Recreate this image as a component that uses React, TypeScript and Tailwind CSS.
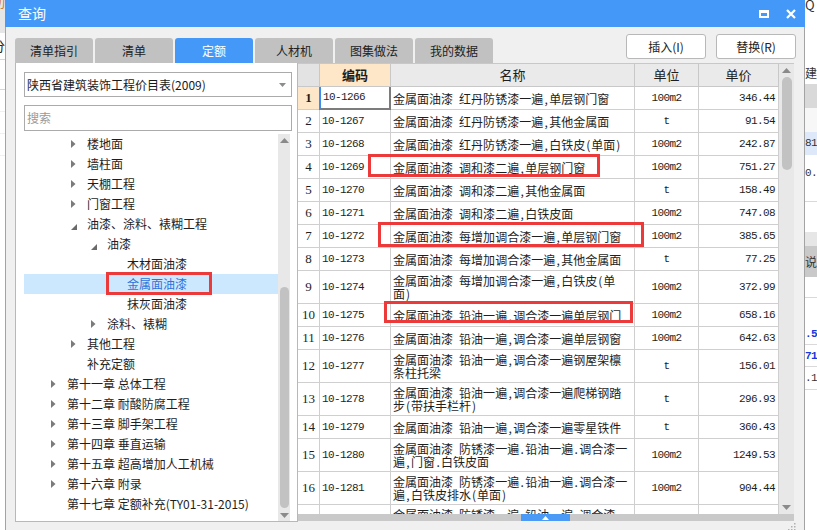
import React from "react";

type Row = { n: number; code: string; lines: string[]; unit: string; price: string; tall?: boolean };

const rows: Row[] = [
  { n: 1, code: "10-1266", lines: ["金属面油漆 红丹防锈漆一遍,单层钢门窗"], unit: "100m2", price: "346.44" },
  { n: 2, code: "10-1267", lines: ["金属面油漆 红丹防锈漆一遍,其他金属面"], unit: "t", price: "91.54" },
  { n: 3, code: "10-1268", lines: ["金属面油漆 红丹防锈漆一遍,白铁皮(单面)"], unit: "100m2", price: "242.87" },
  { n: 4, code: "10-1269", lines: ["金属面油漆 调和漆二遍,单层钢门窗"], unit: "100m2", price: "751.27" },
  { n: 5, code: "10-1270", lines: ["金属面油漆 调和漆二遍,其他金属面"], unit: "t", price: "158.49" },
  { n: 6, code: "10-1271", lines: ["金属面油漆 调和漆二遍,白铁皮面"], unit: "100m2", price: "747.08" },
  { n: 7, code: "10-1272", lines: ["金属面油漆 每增加调合漆一遍,单层钢门窗"], unit: "100m2", price: "385.65" },
  { n: 8, code: "10-1273", lines: ["金属面油漆 每增加调合漆一遍,其他金属面"], unit: "t", price: "77.25" },
  { n: 9, code: "10-1274", lines: ["金属面油漆 每增加调合漆一遍,白铁皮(单", "面)"], unit: "100m2", price: "372.99", tall: true },
  { n: 10, code: "10-1275", lines: ["金属面油漆 铅油一遍,调合漆一遍单层钢门"], unit: "100m2", price: "658.16" },
  { n: 11, code: "10-1276", lines: ["金属面油漆 铅油一遍,调合漆一遍单层钢窗"], unit: "100m2", price: "642.63" },
  { n: 12, code: "10-1277", lines: ["金属面油漆 铅油一遍,调合漆一遍钢屋架檩", "条柱托梁"], unit: "t", price: "156.01", tall: true },
  { n: 13, code: "10-1278", lines: ["金属面油漆 铅油一遍,调合漆一遍爬梯钢踏", "步(带扶手栏杆)"], unit: "t", price: "296.93", tall: true },
  { n: 14, code: "10-1279", lines: ["金属面油漆 铅油一遍,调合漆一遍零星铁件"], unit: "t", price: "360.43" },
  { n: 15, code: "10-1280", lines: ["金属面油漆 防锈漆一遍.铅油一遍.调合漆一", "遍,门窗.白铁皮面"], unit: "100m2", price: "1249.53", tall: true },
  { n: 16, code: "10-1281", lines: ["金属面油漆 防锈漆一遍.铅油一遍.调合漆一", "遍,白铁皮排水(单面)"], unit: "100m2", price: "904.44", tall: true },
  { n: 17, code: "10-1282", lines: ["金属面油漆 防锈漆一遍.铅油一遍.调合漆一", "遍,其他金属面"], unit: "t", price: "214.36", tall: true },
];

type TreeItem = { t: string; l: 0 | 1 | 2 | 3; a: "c" | "e" | "n"; sel?: boolean };

const tree: TreeItem[] = [
  { t: "楼地面", l: 1, a: "c" },
  { t: "墙柱面", l: 1, a: "c" },
  { t: "天棚工程", l: 1, a: "c" },
  { t: "门窗工程", l: 1, a: "c" },
  { t: "油漆、涂料、裱糊工程", l: 1, a: "e" },
  { t: "油漆", l: 2, a: "e" },
  { t: "木材面油漆", l: 3, a: "n" },
  { t: "金属面油漆", l: 3, a: "n", sel: true },
  { t: "抹灰面油漆", l: 3, a: "n" },
  { t: "涂料、裱糊", l: 2, a: "c" },
  { t: "其他工程", l: 1, a: "c" },
  { t: "补充定额", l: 1, a: "n" },
  { t: "第十一章 总体工程", l: 0, a: "c" },
  { t: "第十二章 耐酸防腐工程", l: 0, a: "c" },
  { t: "第十三章 脚手架工程", l: 0, a: "c" },
  { t: "第十四章 垂直运输", l: 0, a: "c" },
  { t: "第十五章 超高增加人工机械", l: 0, a: "c" },
  { t: "第十六章 附录", l: 0, a: "c" },
  { t: "第十七章 定额补充(TY01-31-2015)", l: 0, a: "n" },
];

const plMap: Record<number, string> = { 0: "pl-[27px]", 1: "pl-[47px]", 2: "pl-[67px]", 3: "pl-[87px]" };

const tabs = ["清单指引", "清单", "定额", "人材机", "图集做法", "我的数据"];

function Name({ text }: { text: string }) {
  return (
    <span className="whitespace-nowrap">
      {Array.from(text).map((ch, i) =>
        ch.charCodeAt(0) < 128 ? (
          <span key={i} className="inline-block w-[6px] text-center">
            {ch === " " ? "\u00a0" : ch}
          </span>
        ) : (
          <React.Fragment key={i}>{ch}</React.Fragment>
        )
      )}
    </span>
  );
}

function Arrow({ a }: { a: "c" | "e" | "n" }) {
  return (
    <div className="w-[16px] h-[20px] flex items-center shrink-0">
      {a === "c" && (
        <svg width="5" height="8" viewBox="0 0 5 8">
          <polygon points="0,0 4.5,4 0,8" fill="#7b7b7b" />
        </svg>
      )}
      {a === "e" && (
        <svg width="6" height="6" viewBox="0 0 6 6" className="mt-[5px]">
          <polygon points="6,0 6,6 0,6" fill="#6a6a6a" />
        </svg>
      )}
    </div>
  );
}

function UpTri() {
  return (
    <svg width="9" height="5" viewBox="0 0 9 5">
      <polygon points="0,5 4.5,0 9,5" fill="#8a8a8a" />
    </svg>
  );
}
function DownTri() {
  return (
    <svg width="9" height="5" viewBox="0 0 9 5">
      <polygon points="0,0 9,0 4.5,5" fill="#8a8a8a" />
    </svg>
  );
}

const mono = "font-['Liberation_Mono',monospace] text-[11px] tracking-[-0.6px]";

export default function App() {
  return (
    <div className="w-[817px] h-[530px] overflow-hidden flex bg-white font-['Noto_Sans_CJK_SC',sans-serif] text-[#1e1e1e]">
      {/* left background app strip */}
      <div className="w-[5px] h-[530px] flex flex-col shrink-0 overflow-hidden">
        <div className="h-[33px] bg-[#e6e6e6] flex justify-end items-start overflow-hidden">
          <span className="whitespace-nowrap text-[12px] leading-[10px] text-[#d0781e] -mt-[2px]">项切</span>
        </div>
        <div className="h-[27px] border-b border-[#d6d6d6] flex justify-end items-center overflow-hidden">
          <span className="whitespace-nowrap text-[13px] text-[#222]">部分</span>
        </div>
        <div className="h-[30px] border-b border-[#d6d6d6]" />
        <div className="h-[22px] border-b border-[#f0f0f0]" />
        <div className="h-[22px] border-b border-[#f0f0f0]" />
        <div className="h-[22px] border-b border-[#f0f0f0]" />
        <div className="flex-1 bg-white" />
      </div>

      {/* dialog */}
      <div className="w-[800px] h-[530px] flex flex-col shrink-0">
        <div className="h-[27px] bg-[#4499f8] flex items-center justify-between pl-[13px] pr-[9px] shrink-0">
          <span className="text-white text-[14px]">查询</span>
          <div className="flex items-center gap-[17px]">
            <svg width="10" height="8" viewBox="0 0 10 8">
              <rect x="1" y="1" width="8" height="6" fill="none" stroke="white" strokeWidth="2" />
              <rect x="0" y="0" width="10" height="3" fill="white" />
            </svg>
            <svg width="10" height="10" viewBox="0 0 10 10">
              <path d="M1 1 L9 9 M9 1 L1 9" stroke="white" strokeWidth="2.2" />
            </svg>
          </div>
        </div>

        <div className="flex-1 flex flex-col bg-[#f0f0f0] border-l border-r border-[#a3a3a3] pl-[9px] pr-[8px]">
          {/* tabs + buttons */}
          <div className="h-[36px] flex justify-between items-start shrink-0">
            <div className="mt-[11px] flex gap-[2px]">
              {tabs.map((t) => (
                <div
                  key={t}
                  className={
                    t === "定额"
                      ? "w-[78px] h-[25px] rounded-t-[3px] bg-[#4499f8] text-white text-[12px] flex items-center justify-center"
                      : "w-[78px] h-[25px] rounded-t-[3px] bg-[#c1c1c1] text-[#222] text-[12px] flex items-center justify-center"
                  }
                >
                  {t}
                </div>
              ))}
            </div>
            <div className="mt-[7px] flex gap-[10px]">
              <div className="w-[80px] h-[25px] bg-white border border-[#b8b8b8] rounded-[3px] text-[12px] text-[#222] flex items-center justify-center">
                插入(I)
              </div>
              <div className="w-[80px] h-[25px] bg-white border border-[#b8b8b8] rounded-[3px] text-[12px] text-[#222] flex items-center justify-center">
                替换(R)
              </div>
            </div>
          </div>

          {/* content */}
          <div className="flex h-[459px] shrink-0">
            {/* left panel */}
            <div className="w-[283px] h-[459px] bg-white border-l border-r border-b border-[#b8b8b8] flex flex-col pt-[9px] shrink-0">
              <div className="ml-[8px] mr-[5px] h-[25px] border border-[#ababab] flex items-center justify-between pl-[2px] pr-[5px] text-[12px] text-[#1a1a1a]">
                <span>陕西省建筑装饰工程价目表(2009)</span>
                <svg width="7" height="4" viewBox="0 0 7 4">
                  <polygon points="0,0 7,0 3.5,4" fill="#8c8c8c" />
                </svg>
              </div>
              <div className="ml-[8px] mr-[5px] mt-[8px] h-[26px] border border-[#ababab] flex items-center pl-[2px] text-[12px] text-[#9a9a9a]">
                搜索
              </div>
              <div className="mt-[3px] ml-[8px] mr-[5px] flex flex-1 min-h-0">
                <div className="w-[254px] flex flex-col">
                  {tree.map((it) => (
                    <div
                      key={it.t}
                      className={
                        (it.sel ? "bg-[#cce8ff] text-[#2f73d9] " : "text-[#1e1e1e] ") +
                        "relative h-[20px] flex items-center text-[12px] whitespace-nowrap " +
                        plMap[it.l]
                      }
                    >
                      <Arrow a={it.a} />
                      <span>{it.t}</span>
                      {it.sel && (
                        <div className="absolute left-[82px] top-[-2px] w-[106px] h-[23px] border-[3px] border-[#ec3a3a]" />
                      )}
                    </div>
                  ))}
                </div>
                <div className="w-[12px] bg-[#e8e8e8] flex flex-col items-center">
                  <div className="h-[12px] flex items-center justify-center">
                    <UpTri />
                  </div>
                  <div className="h-[141px]" />
                  <div className="w-[9px] h-[221px] rounded-[5px] bg-[#c2c2c2]" />
                  <div className="flex-1" />
                  <div className="h-[12px] flex items-center justify-center">
                    <DownTri />
                  </div>
                </div>
              </div>
            </div>

            {/* table panel */}
            <div className="w-[496px] h-[458px] flex flex-col shrink-0">
              <div className="flex h-[451px] border-t border-[#c8c8c8]">
                <div className="w-[481px] flex flex-col">
                  <div className="grid grid-cols-[22px_71px_244px_64px_80px] h-[23px] text-[13px] shrink-0">
                    <div className="bg-[#e3e3e3] border-r border-b border-[#c8c8c8]" />
                    <div className="bg-[#fde7c8] border-r border-b border-[#c8c8c8] flex items-center justify-center font-bold">
                      编码
                    </div>
                    <div className="bg-[#eaeaea] border-r border-b border-[#c8c8c8] flex items-center justify-center">名称</div>
                    <div className="bg-[#eaeaea] border-r border-b border-[#c8c8c8] flex items-center justify-center">单位</div>
                    <div className="bg-[#eaeaea] border-r border-b border-[#c8c8c8] flex items-center justify-center">单价</div>
                  </div>
                  <div className="relative flex-1 overflow-hidden bg-white">
                    {rows.map((r) => (
                      <div
                        key={r.n}
                        className={
                          (r.tall ? "h-[33px] " : "h-[23px] ") +
                          "grid grid-cols-[22px_71px_244px_64px_80px] text-[12px]"
                        }
                      >
                        <div
                          className={
                            (r.n === 1 ? "bg-[#fde7c8] font-bold " : "") +
                            "border-r border-b border-[#cfcfcf] flex items-center justify-center font-['Liberation_Serif',serif] text-[13px]"
                          }
                        >
                          {r.n}
                        </div>
                        <div
                          className={
                            (r.n === 1
                              ? "border-l-2 border-l-[#3b8cf5] border-r-2 border-r-[#7c7c7c] border-b-2 border-b-[#7c7c7c] -ml-[1px] "
                              : "border-r border-b border-[#cfcfcf] ") +
                            "flex items-center pl-[2px] " +
                            mono
                          }
                        >
                          {r.code}
                        </div>
                        <div className="border-r border-b border-[#cfcfcf] flex flex-col justify-center pl-[2px] leading-[13px] overflow-hidden">
                          {r.lines.map((l, i) => (
                            <div key={i}>
                              <Name text={l} />
                            </div>
                          ))}
                        </div>
                        <div className={"border-r border-b border-[#cfcfcf] flex items-center justify-center " + mono}>
                          {r.unit}
                        </div>
                        <div className={"border-r border-b border-[#cfcfcf] flex items-center justify-end pr-[3px] " + mono}>
                          {r.price}
                        </div>
                      </div>
                    ))}
                    <div className="absolute left-[70px] top-[67px] w-[232px] h-[23px] border-[3px] border-[#ec3a3a]" />
                    <div className="absolute left-[80px] top-[135px] w-[266px] h-[25px] border-[3px] border-[#ec3a3a]" />
                    <div className="absolute left-[86px] top-[214px] w-[249px] h-[22px] border-[3px] border-[#ec3a3a]" />
                  </div>
                </div>
                <div className="w-[15px] bg-[#e8e8e8] flex flex-col items-center">
                  <div className="h-[13px] flex items-center justify-center">
                    <UpTri />
                  </div>
                  <div className="w-[10px] h-[93px] rounded-[5px] bg-[#c2c2c2]" />
                  <div className="flex-1" />
                  <div className="h-[13px] flex items-center justify-center">
                    <DownTri />
                  </div>
                </div>
              </div>
              <div className="h-[7px] bg-[#c9c9c9] flex">
                <div className="w-[223px]" />
                <div className="w-[49px] h-[7px] bg-[#4a9af6] flex items-center justify-center">
                  <svg width="7" height="4" viewBox="0 0 7 4">
                    <polygon points="0,4 3.5,0 7,4" fill="white" />
                  </svg>
                </div>
              </div>
            </div>
          </div>
          <div className="flex-1 flex justify-end items-start pt-[1px]">
            <svg width="8" height="8" viewBox="0 0 8 8">
              <rect x="6" y="0" width="1.5" height="1.5" fill="#b0b0b0" />
              <rect x="3" y="3" width="1.5" height="1.5" fill="#b0b0b0" />
              <rect x="6" y="3" width="1.5" height="1.5" fill="#b0b0b0" />
              <rect x="0" y="6" width="1.5" height="1.5" fill="#b0b0b0" />
              <rect x="3" y="6" width="1.5" height="1.5" fill="#b0b0b0" />
              <rect x="6" y="6" width="1.5" height="1.5" fill="#b0b0b0" />
            </svg>
          </div>
        </div>
      </div>

      {/* right background app strip */}
      <div className="w-[12px] h-[530px] flex flex-col shrink-0 overflow-hidden text-[12px] bg-white">
        <div className="h-[27px] overflow-hidden whitespace-nowrap text-[13px] leading-[10px] text-[#333]">Q</div>
        <div className="h-[35px]" />
        <div className="h-[22px] whitespace-nowrap leading-[22px] text-[#333]">建未</div>
        <div className="h-[24px] bg-[#d9d9d9]" />
        <div className="h-[24px] bg-[#f7f7f7]" />
        <div className={"h-[23px] bg-[#dde8f9] leading-[23px] text-[#333] whitespace-nowrap " + mono}>81</div>
        <div className={"h-[47px] border-b border-[#d9d9d9] pt-[10px] text-[#333] whitespace-nowrap " + mono}>0.</div>
        <div className="h-[30px]" />
        <div className="h-[14px] bg-[#e6e6e6]" />
        <div className="h-[31px] bg-[#c9c9c9] leading-[31px] text-[#333] whitespace-nowrap">说明</div>
        <div className="h-[21px] border-b border-[#d9d9d9]" />
        <div className="h-[25px]" />
        <div className={"h-[22px] border-b border-[#d9d9d9] leading-[22px] font-bold text-[#1536e0] whitespace-nowrap " + mono}>.5</div>
        <div className={"h-[22px] border-b border-[#d9d9d9] leading-[22px] font-bold text-[#1536e0] whitespace-nowrap " + mono}>71</div>
        <div className={"h-[23px] border-b border-[#d9d9d9] leading-[23px] text-[#333] whitespace-nowrap " + mono}>.1</div>
        <div className="flex-1" />
      </div>
    </div>
  );
}
